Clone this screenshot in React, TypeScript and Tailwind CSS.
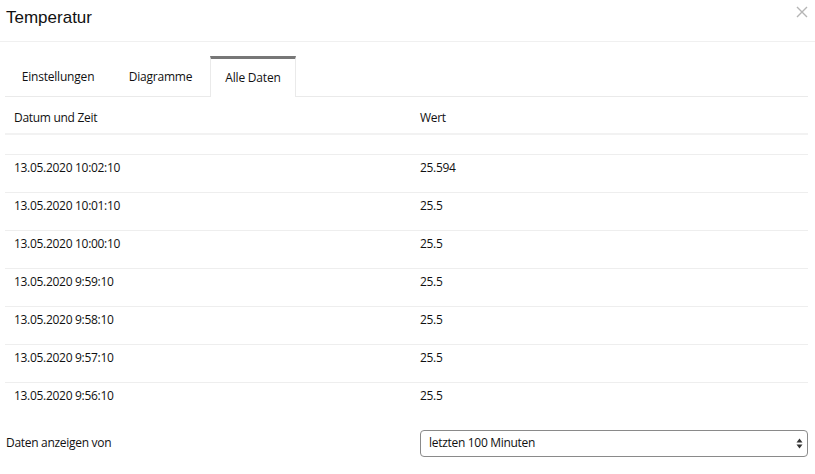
import React from "react";

const rows = [
  ["13.05.2020 10:02:10", "25.594"],
  ["13.05.2020 10:01:10", "25.5"],
  ["13.05.2020 10:00:10", "25.5"],
  ["13.05.2020 9:59:10", "25.5"],
  ["13.05.2020 9:58:10", "25.5"],
  ["13.05.2020 9:57:10", "25.5"],
  ["13.05.2020 9:56:10", "25.5"],
];

export default function App() {
  return (
    <div className="w-[815px] h-[474px] bg-white overflow-hidden text-[#111]" style={{ fontFamily: '"Open Sans", sans-serif' }}>
      <div className="h-[42px] border-b border-[#f0f0f0] flex items-center justify-between pl-[6px] pr-[7px]">
        <div className="text-[17px] text-[#111] pb-[6px]" style={{ fontFamily: '"Liberation Sans", Arial, sans-serif' }}>Temperatur</div>
        <svg width="12" height="12" viewBox="0 0 12 12" className="mb-[18px]">
          <path d="M1 1 L11 11 M11 1 L1 11" stroke="#b5b5b5" strokeWidth="1.4" />
        </svg>
      </div>
      <div className="px-[5px] pr-[7px]">
        <div className="mt-[14px] flex h-[41px] border-b border-[#eaeaea] text-[12px] tracking-[-0.2px]">
          <div className="w-[106px] flex items-center justify-center pt-[2px]">Einstellungen</div>
          <div className="w-[99px] flex items-center justify-center pt-[2px]">Diagramme</div>
          <div className="w-[86px] flex items-center justify-center border-t-[3px] border-t-[#777] border-x border-x-[#eaeaea] bg-white mb-[-1px] pb-[1px]">Alle Daten</div>
        </div>
        <div className="text-[12px] leading-[18px] tracking-[-0.3px]">
          <div className="flex h-[38px] items-start pt-[12px] border-b-2 border-[#f2f2f2]">
            <div className="w-[406px] pl-[9px]">Datum und Zeit</div>
            <div className="pl-[9px]">Wert</div>
          </div>
          <div className="h-[20px] border-b border-[#eeeeee]" />
          {rows.map(([d, v], i) => (
            <div key={i} className={`flex h-[38px] items-start pt-[4px] ${i < rows.length - 1 ? "border-b border-[#eeeeee]" : ""}`}>
              <div className="w-[406px] pl-[9px]">{d}</div>
              <div className="pl-[9px]">{v}</div>
            </div>
          ))}
        </div>
        <div className="flex items-center h-[36px] mt-[4px] text-[12px] tracking-[-0.3px]">
          <div className="w-[415px] pl-[1px]">Daten anzeigen von</div>
          <div className="flex-1 h-[27px] rounded-[4px] border border-[#8a8a8a] flex items-center justify-between pl-[8px] pr-[4px]">
            <span>letzten 100 Minuten</span>
            <svg width="7" height="11" viewBox="0 0 7 11">
              <path d="M3.5 0.5 L6.5 4.5 L0.5 4.5 Z" fill="#333" />
              <path d="M3.5 10.5 L6.5 6.5 L0.5 6.5 Z" fill="#333" />
            </svg>
          </div>
        </div>
      </div>
    </div>
  );
}
